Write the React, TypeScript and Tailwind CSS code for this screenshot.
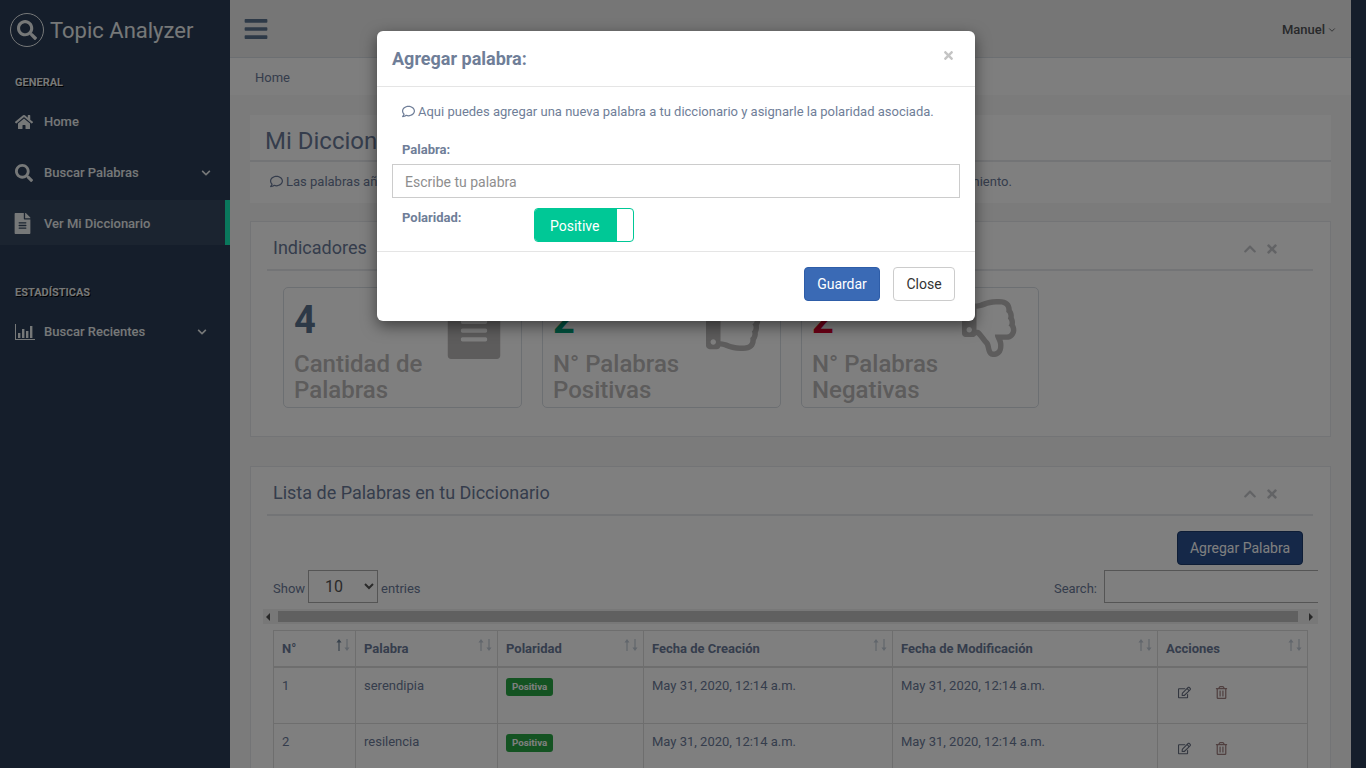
import React from 'react';
import {
  FaBars, FaChevronDown, FaChevronUp, FaFileAlt, FaHome, FaRegComment, FaRegEdit,
  FaRegThumbsDown, FaRegThumbsUp, FaRegTrashAlt, FaSearch, FaTimes,
} from 'react-icons/fa';
import { ChevronDown } from 'lucide-react';

const BarsIcon: React.FC = () => (
  <svg viewBox="0 0 20 16" className="w-5 h-4 fill-current">
    <path d="M0 0h1v15h19v1H0z" />
    <rect x="3" y="9" width="2.4" height="5" />
    <rect x="7" y="5" width="2.4" height="9" />
    <rect x="11" y="7" width="2.4" height="7" />
    <rect x="15" y="2" width="2.4" height="12" />
  </svg>
);

const SortIcon: React.FC<{ active?: boolean }> = ({ active }) => (
  <span className="absolute right-[5px] top-[7px] flex gap-[2px]">
    <svg viewBox="0 0 7 14" className={`w-[6px] h-[14px] ${active ? 'text-[#73879c]' : 'text-[#c3ccd8]'}`}>
      <path d="M3.5 0 6.5 4H4.2v10H2.8V4H.5z" fill="currentColor" />
    </svg>
    <svg viewBox="0 0 7 14" className="w-[6px] h-[14px] text-[#c3ccd8]">
      <path d="M3.5 14 .5 10h2.3V0h1.4v10h2.3z" fill="currentColor" />
    </svg>
  </span>
);

const MenuItem: React.FC<{
  icon: React.ReactNode;
  label: string;
  arrow?: boolean;
  arrowInset?: string;
  active?: boolean;
}> = ({ icon, label, arrow, active, arrowInset = 'mr-[19px]' }) => (
  <div className={`h-[45px] pl-[15px] flex items-center text-[13px] font-medium ${active ? '-mt-[1px] mb-[7px] pt-[2px] bg-[#364860] border-r-[5px] border-[#14f0b8]' : 'mb-[6px]'}`}>
    <span className="w-[29px] flex items-center text-[18px]">{icon}</span>
    <span className="flex-1">{label}</span>
    {arrow && <FaChevronDown className={`text-[10px] ${arrowInset}`} />}
  </div>
);

const Sidebar: React.FC = () => (
  <aside className="w-[230px] shrink-0 text-[#ecf0f1]">
    <div className="h-[60px] pl-[10px] flex items-center gap-[6px]">
      <span className="w-[34px] h-[34px] rounded-full border border-[#ecf0f1] flex items-center justify-center text-[20px]">
        <FaSearch />
      </span>
      <span className="text-[22px] leading-none mt-[1px]">Topic Analyzer</span>
    </div>
    <h3 className="mt-[17px] h-[12px] pl-[15px] text-[11px] leading-[12px] font-bold [text-shadow:1px_1px_#000]">GENERAL</h3>
    <div className="mt-[10px]">
      <MenuItem icon={<FaHome />} label="Home" />
      <MenuItem icon={<FaSearch />} label="Buscar Palabras" arrow />
      <MenuItem icon={<FaFileAlt className="text-[21px] -ml-[3px]" />} label="Ver Mi Diccionario" active />
    </div>
    <h3 className="mt-[42px] h-[12px] pl-[15px] text-[11px] leading-[12px] font-bold [text-shadow:1px_1px_#000]">ESTADÍSTICAS</h3>
    <div className="mt-[10px]">
      <MenuItem icon={<BarsIcon />} label="Buscar Recientes" arrow arrowInset="mr-[23px]" />
    </div>
  </aside>
);

const PanelHeader: React.FC<{ title: string }> = ({ title }) => (
  <div className="h-[49px] ml-[16px] mr-[17px] border-b-2 border-[#e6e9ed] flex items-center justify-between pl-[6px] pr-[34px]">
    <h2 className="text-[18px] leading-none mt-[4px]">{title}</h2>
    <div className="flex items-center gap-[8px] mt-[6px] text-[14px] text-[#c5c7cb]">
      <FaChevronUp />
      <FaTimes />
    </div>
  </div>
);

const StatCard: React.FC<{
  value: string;
  color: string;
  lines: string[];
  icon: React.ReactNode;
  className: string;
}> = ({ value, color, lines, icon, className }) => (
  <div className={`relative h-[121px] border border-[#d9dee4] rounded-[5px] pl-[10px] ${className}`}>
    <div className={`text-[38px] font-bold leading-none mt-[13px] ${color}`}>{value}</div>
    <div className="mt-[12px] text-[24px] font-medium leading-[26px] text-[#bab8b8]">
      {lines.map(l => <div key={l}>{l}</div>)}
    </div>
    {icon}
  </div>
);

const rows = [
  { id: 1, word: 'serendipia' },
  { id: 2, word: 'resilencia' },
];

const headers = [
  { label: 'N°', w: 'w-[82px]', active: true },
  { label: 'Palabra', w: 'w-[142px]' },
  { label: 'Polaridad', w: 'w-[146px]' },
  { label: 'Fecha de Creación', w: 'w-[249px]' },
  { label: 'Fecha de Modificación', w: 'w-[265px]' },
  { label: 'Acciones', w: 'w-[150px]' },
];

const cell = 'border border-[#dddddd] px-[8px] pt-[8px] align-top h-[57px]';

const Modal: React.FC = () => (
  <div className="absolute left-[377px] top-[31px] w-[598px] h-[290px] bg-white rounded-[6px] shadow-[0_5px_15px_rgba(0,0,0,0.5)] text-[#6f7e98] flex flex-col">
    <div className="relative h-[56px] shrink-0 border-b border-[#e5e5e5] pl-[15px] flex items-center">
      <h4 className="text-[18px] font-bold leading-none">Agregar palabra:</h4>
      <FaTimes className="absolute right-[20px] top-[18px] text-[13px] text-[#c4c4c4]" />
    </div>
    <div className="flex-1 px-[15px]">
      <p className="mt-[16px] pl-[10px] h-[17px] text-[13px] leading-[17px] flex items-center gap-[3px]">
        <FaRegComment className="text-[13px]" /> Aqui puedes agregar una nueva palabra a tu diccionario y asignarle la polaridad asociada.
      </p>
      <label className="block mt-[21px] pl-[10px] text-[13px] font-bold leading-[17px]">Palabra:</label>
      <input
        readOnly
        placeholder="Escribe tu palabra"
        className="block mt-[6px] w-[568px] h-[34px] border border-[#cccccc] px-[12px] pt-[2px] text-[14px] text-[#555555] placeholder:text-[#8e8e8e] outline-none"
      />
      <div className="mt-[10px] flex items-start">
        <label className="w-[142px] pl-[10px] pt-[1px] text-[13px] font-bold leading-[17px]">Polaridad:</label>
        <div className="w-[100px] h-[34px] rounded-[4px] border border-[#00c896] bg-white flex overflow-hidden">
          <span className="w-[82px] bg-[#00c896] text-white text-[14px] flex items-center pl-[15px] pt-[2px]">Positive</span>
        </div>
      </div>
    </div>
    <div className="h-[70px] shrink-0 border-t border-[#e5e5e5] flex items-start justify-end gap-[13px] pt-[15px] pr-[20px] text-[14px]">
      <button className="w-[76px] h-[34px] rounded-[4px] bg-[#3a6ab5] border border-[#2e5da8] text-white">Guardar</button>
      <button className="w-[62px] h-[34px] rounded-[4px] bg-white border border-[#cccccc] text-[#333333]">Close</button>
    </div>
  </div>
);

export default function App() {
  return (
    <div className="relative w-[1366px] h-[768px] overflow-hidden flex bg-[#2a3c56] text-[#6b7a99] font-['Roboto',sans-serif]">
      <Sidebar />
      <main className="w-[1121px] shrink-0 bg-[#f7f7f7] overflow-hidden text-[13px]">
        <header className="h-[58px] bg-[#ededed] border-b border-[#d9dee4] flex items-center justify-between pl-[13px] pr-[14px]">
          <FaBars className="text-[26px] text-[#5a738e]" />
          <span className="flex items-center gap-[2px] mt-[2px] font-medium text-[#515356]">
            Manuel <ChevronDown size={10} strokeWidth={2} />
          </span>
        </header>
        <div className="h-[37px] bg-[#fcfcfc] pl-[25px] flex items-center">
          <span className="mt-[2px]">Home</span>
        </div>

        <div className="mx-[20px] mt-[20px] bg-white h-[88px]">
          <div className="h-[47px] border-b-2 border-[#e6e9ed] pl-[15px] flex items-center">
            <h1 className="text-[24px] leading-none mt-[7px]">Mi Diccionario</h1>
          </div>
          <p className="pl-[20px] pt-[10px] flex items-center gap-[3px] whitespace-nowrap">
            <FaRegComment className="text-[13px]" /> Las palabras añadidas al diccionario serán consideradas por la aplicación web, durante el proceso del análisis de sentimiento.
          </p>
        </div>

        <section className="mx-[20px] mt-[18px] h-[216px] bg-white border border-[#e6e9ed]">
          <PanelHeader title="Indicadores" />
          <div className="mt-[16px] ml-[32px] flex">
            <StatCard
              value="4" color="text-[#5a738e]" lines={['Cantidad de', 'Palabras']} className="w-[239px] mr-[20px]"
              icon={<FaFileAlt className="absolute right-[12px] top-[1px] text-[70px] text-[#bab8b8]" />}
            />
            <StatCard
              value="2" color="text-[#00a07a]" lines={['N° Palabras', 'Positivas']} className="w-[239px] mr-[20px]"
              icon={<FaRegThumbsUp className="absolute right-[16px] top-[5px] text-[58px] text-[#bab8b8]" />}
            />
            <StatCard
              value="2" color="text-[#d9002c]" lines={['N° Palabras', 'Negativas']} className="w-[238px]"
              icon={<FaRegThumbsDown className="absolute right-[18px] top-[11px] text-[58px] text-[#bab8b8]" />}
            />
          </div>
        </section>

        <section className="relative mx-[20px] mt-[29px] h-[320px] bg-white border border-[#e6e9ed]">
          <PanelHeader title="Lista de Palabras en tu Diccionario" />
          <div className="flex justify-end pr-[27px] mt-[15px]">
            <button className="w-[126px] h-[34px] rounded-[4px] bg-[#2a5190] border border-[#1c3a6c] text-white text-[14px]">Agregar Palabra</button>
          </div>
          <div className="mt-[5px] ml-[12px] w-[1055px] overflow-hidden">
            <div className="flex items-center justify-between h-[33px] pl-[10px]">
              <div className="flex items-center gap-[3px]">
                <span className="mt-[5px]">Show</span>
                <select className="w-[70px] h-[33px] border border-[#aaaaaa] px-[12px] text-[16px] text-[#555555] bg-transparent">
                  <option>10</option>
                </select>
                <span className="mt-[5px]">entries</span>
              </div>
              <div className="flex items-center gap-[7px]">
                <span className="mt-[5px]">Search:</span>
                <span className="w-[214px] h-[33px] border border-[#aaaaaa] border-r-0 block" />
              </div>
            </div>
            <div className="mt-[6px] h-[15px] bg-[#f1f1f1] flex items-center px-[3px]">
              <span className="w-0 h-0 border-y-[4px] border-y-transparent border-r-[4px] border-r-[#505050]" />
              <span className="ml-[8px] w-[1020px] h-[11px] bg-[#c1c1c1]" />
              <span className="ml-auto mr-[2px] w-0 h-0 border-y-[4px] border-y-transparent border-l-[4px] border-l-[#505050]" />
            </div>
            <table className="mt-[6px] ml-[10px] table-fixed w-[1034px] border-collapse">
              <thead>
                <tr className="h-[36px]">
                  {headers.map(h => (
                    <th key={h.label} className={`relative ${h.w} border border-[#dddddd] border-b-2 px-[8px] pt-[1px] text-left font-bold text-[13px]`}>
                      {h.label}
                      <SortIcon active={h.active} />
                    </th>
                  ))}
                </tr>
              </thead>
              <tbody>
                {rows.map(r => (
                  <tr key={r.id}>
                    <td className={cell}>{r.id}</td>
                    <td className={cell}>{r.word}</td>
                    <td className={cell}>
                      <span className="inline-block mt-[1px] h-[18px] px-[6px] rounded-[3px] bg-[#28a745] text-[9.75px] font-bold leading-[18px] text-white">Positiva</span>
                    </td>
                    <td className={cell}>May 31, 2020, 12:14 a.m.</td>
                    <td className={cell}>May 31, 2020, 12:14 a.m.</td>
                    <td className={cell}>
                      <div className="flex items-center gap-[24px] pl-[12px] pt-[10px] text-[13px] text-[#666e80]">
                        <FaRegEdit />
                        <FaRegTrashAlt className="text-[#a08080] text-[13px]" />
                      </div>
                    </td>
                  </tr>
                ))}
              </tbody>
            </table>
          </div>
        </section>
      </main>
      <div className="absolute inset-0 bg-black/50" />
      <Modal />
    </div>
  );
}
